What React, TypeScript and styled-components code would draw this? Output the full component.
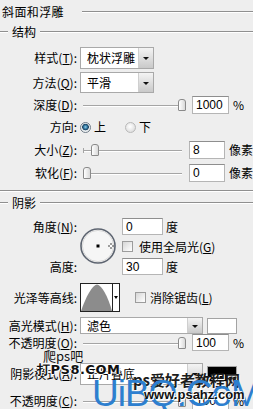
import React from 'react'
import styled, { createGlobalStyle } from 'styled-components'

const GlobalStyle = createGlobalStyle`
  html, body {
    margin: 0;
    padding: 0;
    background: #eeeeee;
  }
`

const Mn = ({ k }: { k: string }) => (
  <>
    (<u>{k}</u>)
  </>
)

export default function App() {
  return (
    <Page>
      <GlobalStyle />
      <Header>
        <span>斜面和浮雕</span>
        <Rule />
      </Header>

      <Legend $top={0}>
        <LeftTick />
        <span>结构</span>
        <Rule />
      </Legend>

      <Row $h={25} $mt={5}>
        <Label>
          样式<Mn k="T" />:
        </Label>
        <Select $w={74} $h={22}>
          <SelectText>枕状浮雕</SelectText>
          <DropBtn />
        </Select>
      </Row>
      <Row $h={25}>
        <Label>
          方法<Mn k="Q" />:
        </Label>
        <Select $w={74} $h={21}>
          <SelectText>平滑</SelectText>
          <DropBtn />
        </Select>
      </Row>
      <Row $h={19}>
        <Label>
          深度<Mn k="D" />:
        </Label>
        <Slider value={1} />
        <NumInput>1000</NumInput>
        <Unit>%</Unit>
      </Row>
      <Row $h={26}>
        <Label>方向:</Label>
        <RadioGroup>
          <Radio $on />
          <span>上</span>
          <Radio $on={false} style={{ marginLeft: 16 }} />
          <span>下</span>
        </RadioGroup>
      </Row>
      <Row $h={19}>
        <Label>
          大小<Mn k="Z" />:
        </Label>
        <Slider value={0.04} tick />
        <NumInput>8</NumInput>
        <Unit>像素</Unit>
      </Row>
      <Row $h={19} $mt={4}>
        <Label>
          软化<Mn k="F" />:
        </Label>
        <Slider value={0} />
        <NumInput>0</NumInput>
        <Unit>像素</Unit>
      </Row>
      <GroupEnd />

      <Legend $top={4}>
        <LeftTick />
        <span>阴影</span>
        <Rule />
      </Legend>

      <AngleGrid>
        <Label style={{ gridRow: 1 }}>
          角度<Mn k="N" />:
        </Label>
        <Dial>
          <svg width="40" height="40" viewBox="0 0 40 40">
            <circle cx="18" cy="19" r="17" fill="#f6f6f6" stroke="#5d6470" strokeWidth="1.6" />
            <circle cx="18" cy="19" r="15.6" fill="none" stroke="#d8d8d8" strokeWidth="1" />
            <rect x="16.5" y="17.5" width="3" height="3" fill="#000" />
            <path d="M28 19h6M31 16v6" stroke="#444" strokeWidth="1" />
            <rect x="30" y="18" width="2" height="2" fill="#fff" />
          </svg>
        </Dial>
        <AngleField style={{ gridRow: 1 }}>
          <NumInput $w={41}>0</NumInput>
          <span>度</span>
        </AngleField>
        <AngleField style={{ gridRow: 2 }}>
          <Check />
          <span>
            使用全局光<Mn k="G" />
          </span>
        </AngleField>
        <Label style={{ gridRow: 3 }}>高度:</Label>
        <AngleField style={{ gridRow: 3 }}>
          <NumInput $w={41}>30</NumInput>
          <span>度</span>
        </AngleField>
      </AngleGrid>

      <Row $h={29} $mt={8}>
        <Label>光泽等高线:</Label>
        <Contour>
          <svg width="40" height="29" viewBox="0 0 40 29">
            <rect x="0.5" y="0.5" width="39" height="28" fill="#fff" stroke="#222" />
            <path d="M1 28 C 6 14, 12 2, 17 1.5 C 22 2, 28 14, 32 28 Z" fill="#8c8c8c" />
            <line x1="32.5" y1="0" x2="32.5" y2="29" stroke="#222" />
            <path d="M34 13h4l-2 3z" fill="#000" />
          </svg>
        </Contour>
        <CheckLabel>
          <Check />
          <span>
            消除锯齿<Mn k="L" />
          </span>
        </CheckLabel>
      </Row>

      <Row $h={17} $mt={5}>
        <Label>
          高光模式<Mn k="H" />:
        </Label>
        <Select $w={123} $h={17}>
          <SelectText>滤色</SelectText>
          <DropBtn />
        </Select>
        <Swatch $c="#ffffff" />
      </Row>
      <Row $h={17}>
        <Label>
          不透明度<Mn k="O" />:
        </Label>
        <Slider value={1} />
        <NumInput $h={17}>100</NumInput>
        <Unit>%</Unit>
      </Row>
      <Row $h={23} $mt={11}>
        <Label>
          阴影模式<Mn k="A" />:
        </Label>
        <Select $w={123} $h={22}>
          <SelectText>正片叠底</SelectText>
          <DropBtn />
        </Select>
        <Swatch $c="#000000" $h={16} />
      </Row>
      <Row $h={18} $mt={7}>
        <Label>
          不透明度<Mn k="C" />:
        </Label>
        <Slider value={1} />
        <NumInput>100</NumInput>
        <Unit>%</Unit>
      </Row>

      <MarkSmall>爬ps吧</MarkSmall>
      <MarkPs8>打PS8.COM</MarkPs8>
      <MarkSite>ps爱好者教程网</MarkSite>
      <MarkUibq>UiBQ.CoM</MarkUibq>
      <MarkUrl>www.psahz.com</MarkUrl>
    </Page>
  )
}

const Slider = ({ value, tick }: { value: number; tick?: boolean }) => (
  <Track>
    {tick && <Tick />}
    <Thumb style={{ left: Math.round(value * 95) + (tick ? 4 : 0) }} />
  </Track>
)

const Page = styled.div`
  position: relative;
  width: 253px;
  height: 409px;
  overflow: hidden;
  background: #eeeeee;
  color: #000;
  font-family: 'Noto Sans CJK SC', 'Liberation Sans', sans-serif;
  font-size: 12px;
  line-height: 12px;
`

const Header = styled.div`
  display: flex;
  align-items: center;
  height: 24px;
  padding-left: 2px;
  gap: 18px;
  span {
    letter-spacing: 0.4px;
  }
`

const Rule = styled.div`
  flex: 1;
  height: 1px;
  background: #8f8f8f;
  border-bottom: 1px solid #ffffff;
`

const Legend = styled.div<{ $top: number }>`
  display: flex;
  align-items: center;
  height: 16px;
  margin-top: ${({ $top }) => $top}px;
  gap: 4px;
`

const LeftTick = styled.div`
  width: 8px;
  height: 1px;
  background: #8f8f8f;
  border-bottom: 1px solid #ffffff;
`

const GroupEnd = styled.div`
  height: 8px;
  border-bottom: 1px solid #8f8f8f;
  box-shadow: 0 1px 0 #ffffff;
`

const Row = styled.div<{ $h: number; $mt?: number }>`
  display: flex;
  align-items: center;
  height: ${({ $h }) => $h}px;
  margin-top: ${({ $mt }) => $mt ?? 0}px;
`

const Label = styled.div`
  width: 77px;
  margin-right: 3px;
  text-align: right;
  white-space: nowrap;
  flex-shrink: 0;
  u {
    text-decoration-thickness: 1px;
    text-underline-offset: 1px;
  }
`

const Select = styled.div<{ $w: number; $h: number }>`
  display: flex;
  align-items: stretch;
  width: ${({ $w }) => $w}px;
  height: ${({ $h }) => $h}px;
  box-sizing: border-box;
  background: #ffffff;
  border: 1px solid #a9a9a9;
  flex-shrink: 0;
`

const SelectText = styled.div`
  flex: 1;
  display: flex;
  align-items: center;
  padding-left: 6px;
  white-space: nowrap;
  overflow: hidden;
`

const DropBtn = styled.div`
  position: relative;
  width: 14px;
  flex-shrink: 0;
  border-left: 1px solid #cfcfcf;
  background: linear-gradient(#f4f4f4, #c9c9c9);
  &::after {
    content: '';
    position: absolute;
    left: 4px;
    top: calc(50% - 1px);
    border-left: 3px solid transparent;
    border-right: 3px solid transparent;
    border-top: 3px solid #111;
  }
`

const Track = styled.div`
  position: relative;
  width: 102px;
  height: 12px;
  margin-left: 3px;
  margin-right: 7px;
  &::before {
    content: '';
    position: absolute;
    left: 0;
    right: 0;
    top: 6px;
    height: 1px;
    background: #a5a5a5;
    box-shadow: 0 1px 0 #ffffff;
  }
`

const Tick = styled.div`
  position: absolute;
  left: 0;
  top: 4px;
  width: 1px;
  height: 5px;
  background: #a5a5a5;
`

const Thumb = styled.div`
  position: absolute;
  top: 0;
  width: 6px;
  height: 10px;
  border: 1px solid #8a8a8a;
  border-radius: 3px 3px 1px 1px;
  background: linear-gradient(90deg, #ffffff, #d9d9d9);
`

const NumInput = styled.div<{ $w?: number; $h?: number }>`
  display: flex;
  align-items: center;
  box-sizing: border-box;
  width: ${({ $w }) => $w ?? 37}px;
  height: ${({ $h }) => $h ?? 18}px;
  padding-left: 3px;
  background: #ffffff;
  border: 1px solid #b5b5b5;
  border-top-color: #8e8e8e;
  font-family: 'Liberation Sans', sans-serif;
  font-size: 12px;
`

const Unit = styled.span`
  margin-left: 4px;
  white-space: nowrap;
`

const RadioGroup = styled.div`
  display: flex;
  align-items: center;
  gap: 3px;
`

const Radio = styled.div<{ $on: boolean }>`
  width: 11px;
  height: 11px;
  border-radius: 50%;
  box-sizing: border-box;
  border: 1px solid ${({ $on }) => ($on ? '#6f7c88' : '#b9b9b9')};
  background: ${({ $on }) =>
    $on
      ? 'radial-gradient(circle at 50% 45%, #8fd0ee 0, #2c6f98 2px, #1a3f5c 3px, #dfe6ea 3.6px, #f8f8f8 5px)'
      : 'radial-gradient(circle at 45% 40%, #ffffff, #d3d3d3)'};
`

const Check = styled.div`
  width: 11px;
  height: 11px;
  box-sizing: border-box;
  border: 1px solid #9c9c9c;
  background: linear-gradient(135deg, #d6d6d6, #ffffff);
  margin-right: 3px;
  flex-shrink: 0;
`

const AngleGrid = styled.div`
  display: grid;
  grid-template-columns: 80px 42px 1fr;
  grid-template-rows: 17px 23px 17px;
  align-items: center;
  margin-top: 7px;
`

const Dial = styled.div`
  grid-column: 2;
  grid-row: 1 / 4;
  align-self: center;
  height: 40px;
  margin-top: 1px;
`

const AngleField = styled.div`
  grid-column: 3;
  display: flex;
  align-items: center;
  gap: 3px;
  height: 17px;
  ${NumInput} {
    height: 17px;
  }
  u {
    text-underline-offset: 1px;
  }
`

const Contour = styled.div`
  width: 40px;
  height: 29px;
  margin-right: 15px;
`

const CheckLabel = styled.div`
  display: flex;
  align-items: center;
  gap: 1px;
`

const Swatch = styled.div<{ $c: string; $h?: number }>`
  width: 30px;
  height: ${({ $h }) => $h ?? 16}px;
  margin-left: 4px;
  box-sizing: border-box;
  background: ${({ $c }) => $c};
  border: 1px solid #a3a3a3;
`

const Mark = styled.div`
  position: absolute;
  white-space: nowrap;
  pointer-events: none;
`

const MarkSmall = styled(Mark)`
  left: 43px;
  top: 349px;
  font-size: 13px;
  line-height: 13px;
  color: #111;
`

const MarkPs8 = styled(Mark)`
  left: 37px;
  top: 363px;
  font-family: 'DejaVu Sans', sans-serif;
  font-weight: bold;
  font-size: 13px;
  line-height: 13px;
  color: #111;
  letter-spacing: 0.5px;
  text-shadow: 1px 0 #fff, -1px 0 #fff, 0 1px #fff, 0 -1px #fff;
`

const MarkSite = styled(Mark)`
  left: 133px;
  top: 372px;
  font-size: 15px;
  line-height: 16px;
  font-weight: bold;
  color: #1d1d1d;
  text-shadow: 1px 1px 0 #fff;
`

const MarkUibq = styled(Mark)`
  left: 92px;
  top: 375px;
  font-family: 'Liberation Sans', sans-serif;
  font-size: 37px;
  line-height: 37px;
  letter-spacing: -1px;
  color: #2d7fcf;
`

const MarkUrl = styled(Mark)`
  left: 144px;
  top: 388px;
  font-family: 'Liberation Sans', sans-serif;
  font-size: 13px;
  line-height: 13px;
  font-weight: bold;
  color: #111;
  text-shadow: 1px 1px 0 #fff, -1px -1px 0 #fff;
`
